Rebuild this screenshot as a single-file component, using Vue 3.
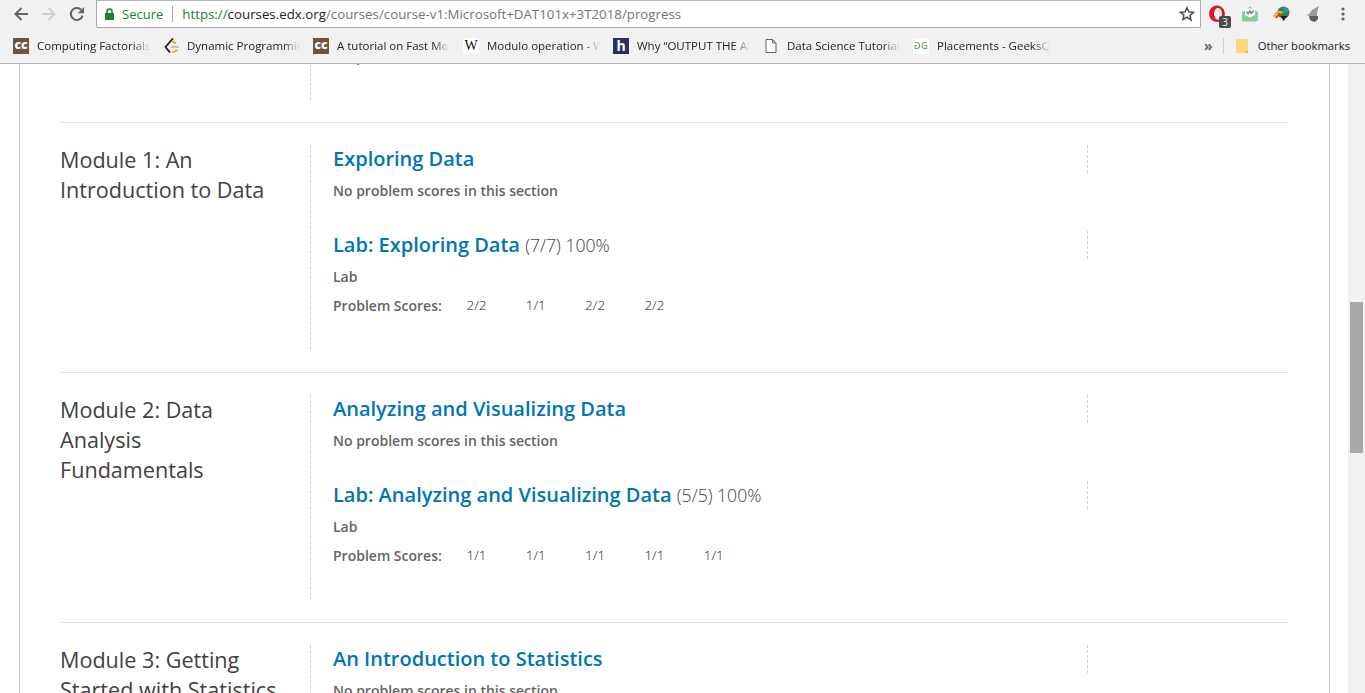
<script setup>
const bookmarks = [
  { label: 'Computing Factorials of Large', icon: 'cc' },
  { label: 'Dynamic Programming Tutorial', icon: 'lc' },
  { label: 'A tutorial on Fast Modulo Mult', icon: 'cc' },
  { label: 'Modulo operation - Wikipedia', icon: 'w' },
  { label: 'Why “OUTPUT THE ANSWER', icon: 'h' },
  { label: 'Data Science Tutorials for', icon: 'doc' },
  { label: 'Placements - GeeksQuiz', icon: 'gg' },
]
const modules = [
  {
    title: ['Module 1: An', 'Introduction to Data'],
    section: 'Exploring Data',
    lab: 'Lab: Exploring Data',
    count: '(7/7)',
    scores: ['2/2', '1/1', '2/2', '2/2'],
  },
  {
    title: ['Module 2: Data', 'Analysis', 'Fundamentals'],
    section: 'Analyzing and Visualizing Data',
    lab: 'Lab: Analyzing and Visualizing Data',
    count: '(5/5)',
    scores: ['1/1', '1/1', '1/1', '1/1', '1/1'],
  },
]
</script>

<template>
  <div class="window">
    <header class="chrome">
      <div class="toolbar">
        <div class="nav">
          <svg width="16" height="16" viewBox="0 0 16 16"><path d="M15 8H2.5M8.5 2 2.5 8l6 6" fill="none" stroke="#5f6368" stroke-width="2"/></svg>
          <svg width="16" height="16" viewBox="0 0 16 16"><path d="M1 8h12.5M7.5 2l6 6-6 6" fill="none" stroke="#cfd0d1" stroke-width="2"/></svg>
          <svg width="16" height="16" viewBox="0 0 16 16"><path d="M13.6 9.6A6 6 0 1 1 12.2 3.8" fill="none" stroke="#5f6368" stroke-width="2"/><path d="M15 1v6.2H8.8z" fill="#5f6368"/></svg>
        </div>
        <div class="omnibox">
          <svg class="lock" width="10" height="12" viewBox="0 0 10 12"><path d="M0 5h9v7H0z" fill="#188038"/><path d="M2 5V3.4a2.5 2.5 0 0 1 5 0V5" fill="none" stroke="#188038" stroke-width="1.5"/></svg>
          <span class="secure">Secure</span>
          <span class="divider"></span>
          <span class="url"><span class="scheme">https://</span><span class="host">courses.edx.org</span>/courses/course-v1:Microsoft+DAT101x+3T2018/progress</span>
          <svg class="star" width="16" height="16" viewBox="0 0 16 16"><path d="M8 1.700l1.900 4.200 4.600.5-3.400 3.100.9 4.500L8 11.200l-4 2.300.9-4.500L1.500 6.400l4.600-.5z" fill="none" stroke="#4a4a4a" stroke-width="1.500"/></svg>
        </div>
        <div class="extensions">
          <span class="ext opera">
            <svg width="18" height="20" viewBox="0 0 18 20"><path fill-rule="evenodd" d="M8 1.500c4.400 0 7.800 3.600 7.800 8.300S12.400 18 8 18 .2 14.500.2 9.800 3.600 1.500 8 1.500zm1 2.400c-2.300 0-4 2.500-4 5.900s1.700 5.900 4 5.900 4-2.500 4-5.900-1.700-5.900-4-5.900z" fill="#e0141e"/></svg>
            <span class="badge">3</span>
          </span>
          <svg width="18" height="18" viewBox="0 0 18 18"><path d="M1 7l3-1.500L9 1.500l5 4L17 7v7.500a2 2 0 0 1-2 2H3a2 2 0 0 1-2-2z" fill="#8ccb94"/><path d="M4 3.500h10v6.500l-5 2.500-5-2.500z" fill="#fff"/><path d="M5.500 6.500 7 9l1.800-3 1.500 2.500L13 5.500" fill="none" stroke="#6a6ad0" stroke-width="1.200"/></svg>
          <svg width="18" height="18" viewBox="0 0 18 18"><circle cx="10.500" cy="7.500" r="6" fill="#2a8a3c"/><path d="M9 2.500a5 5 0 0 1 6.500 4L11 8z" fill="#3f7fd8"/><path d="M1 12c1.500-5 5-6.500 8.500-4" fill="none" stroke="#d9b21e" stroke-width="2.200"/><path d="M3 13c1.500-3 4-3.500 6-2.500" fill="none" stroke="#d8382c" stroke-width="2"/><path d="M7.500 11h7l-4 5z" fill="#16241a"/></svg>
          <svg width="18" height="20" viewBox="0 0 18 20"><path d="M14 2 7 6 4 10l-3 1 4 1v4l4 2 3-3V9z" fill="#9a9a9a"/><path d="M4 12h9v3l-3 3-5-2z" fill="#5d5d5d"/></svg>
          <svg class="menu" width="4" height="14" viewBox="0 0 4 14"><circle cx="2" cy="2" r="1.600" fill="#5f6368"/><circle cx="2" cy="7" r="1.600" fill="#5f6368"/><circle cx="2" cy="12" r="1.600" fill="#5f6368"/></svg>
        </div>
      </div>
      <nav class="bookmarks">
        <a v-for="b in bookmarks" :key="b.label + b.icon" class="bookmark">
          <span v-if="b.icon === 'cc'" class="fav fav-cc">cc</span>
          <svg v-else-if="b.icon === 'lc'" class="fav" width="16" height="16" viewBox="0 0 16 16"><path d="M10 .5 2.500 9 7 14.500" fill="none" stroke="#1f1f1f" stroke-width="1.800"/><path d="M9 3l4 2.500M9.500 14.500 14.500 12" fill="none" stroke="#f0a020" stroke-width="1.800"/><path d="M8 9h8" stroke="#b8b8b8" stroke-width="1.600"/></svg>
          <span v-else-if="b.icon === 'w'" class="fav fav-w">W</span>
          <span v-else-if="b.icon === 'h'" class="fav fav-h">h</span>
          <svg v-else-if="b.icon === 'doc'" class="fav" width="16" height="16" viewBox="0 0 16 16"><path d="M3 1.500h6.500L13 5v9.500H3zM9.500 1.500V5H13" fill="#fff" stroke="#5f6368"/></svg>
          <span v-else class="fav fav-g"><span class="g-flip">G</span><span>G</span></span>
          <span class="bm-label">{{ b.label }}</span>
        </a>
        <span class="spacer"></span>
        <span class="more">»</span>
        <span class="sep"></span>
        <svg width="12" height="14" viewBox="0 0 12 14"><path d="M0 0h12v14H0z" fill="#fbd97a"/><path d="M10 12h2v2h-2z" fill="#e8b93f"/></svg>
        <span class="other">Other bookmarks</span>
      </nav>
    </header>

    <div class="viewport">
      <main class="page">
        <div class="frame">
          <section class="module module-clipped">
            <div class="col-title"></div>
            <div class="col-body clipped-body">
              <p class="clipped-line">No problem scores in this section</p>
            </div>
          </section>

          <section v-for="m in modules" :key="m.section" class="module">
            <h2 class="col-title"><span v-for="line in m.title" :key="line" class="title-line">{{ line }}</span></h2>
            <div class="col-body">
              <div class="block">
                <h3 class="heading"><a class="link">{{ m.section }}</a></h3>
                <p class="note">No problem scores in this section</p>
              </div>
              <div class="block lab">
                <h3 class="heading"><a class="link">{{ m.lab }}</a> <span class="count">{{ m.count }} 100%</span></h3>
                <p class="note lab-note">Lab</p>
                <div class="scores">
                  <span class="scores-label">Problem Scores:</span>
                  <span v-for="(s, i) in m.scores" :key="i" class="score">{{ s }}</span>
                </div>
              </div>
            </div>
          </section>

          <section class="module">
            <h2 class="col-title"><span class="title-line">Module 3: Getting</span><span class="title-line">Started with Statistics</span></h2>
            <div class="col-body">
              <div class="block">
                <h3 class="heading"><a class="link">An Introduction to Statistics</a></h3>
                <p class="note">No problem scores in this section</p>
              </div>
            </div>
          </section>
        </div>
      </main>
      <div class="scrollbar"><div class="thumb"></div></div>
    </div>
  </div>
</template>

<style>
html, body { margin: 0; height: 100%; overflow: hidden; background: #fff; }
</style>

<style scoped>
.window {
  width: 1365px;
  height: 693px;
  display: flex;
  flex-direction: column;
  overflow: hidden;
  font-family: "Open Sans", "Noto Sans", sans-serif;
}
.chrome {
  height: 64px;
  box-sizing: border-box;
  flex: none;
  background: #f1f1f1;
  border-bottom: 1px solid #b4b4b4;
}
.toolbar {
  height: 28px;
  display: flex;
  align-items: flex-start;
}
.nav {
  width: 96px;
  height: 28px;
  box-sizing: border-box;
  padding: 0 11px 0 13px;
  display: flex;
  align-items: center;
  justify-content: space-between;
}
.omnibox {
  width: 1105px;
  height: 28px;
  box-sizing: border-box;
  border: 1px solid #a9a9a9;
  border-top-color: #b8b8b8;
  border-radius: 0 0 2px 2px;
  background: #fff;
  display: flex;
  align-items: center;
  padding-left: 8px;
  font-size: 13.3px;
  color: #757575;
}
.lock { flex: none; }
.secure { margin-left: 7px; color: #188038; font-size: 13px; }
.divider { width: 1px; height: 16px; background: #a8a8a8; margin: 0 9px; }
.url { white-space: nowrap; }
.scheme { color: #188038; }
.host { color: #222; }
.star { margin-left: auto; margin-right: 5px; }
.extensions {
  flex: 1;
  height: 28px;
  display: flex;
  align-items: center;
  gap: 14px;
  padding-left: 8px;
}
.ext { position: relative; display: block; width: 18px; height: 20px; }
.badge {
  position: absolute;
  right: -4px;
  bottom: -4px;
  width: 12px;
  height: 12px;
  background: #4a4a4a;
  border-radius: 2px;
  color: #fff;
  font-size: 10px;
  line-height: 12px;
  text-align: center;
}
.menu { margin-left: 4px; }
.bookmarks {
  height: 35px;
  display: flex;
  align-items: center;
  padding-left: 13px;
  padding-right: 15px;
  font-size: 11.5px;
  color: #222;
}
.bookmark {
  width: 150px;
  flex: none;
  display: flex;
  align-items: center;
  white-space: nowrap;
}
.fav {
  width: 16px;
  height: 16px;
  flex: none;
  margin-right: 8px;
  display: block;
  text-align: center;
  line-height: 16px;
}
.fav-cc { background: #6f5440; color: #fff; font-weight: 800; font-size: 12px; line-height: 14px; }
.fav-w { background: #fff; color: #111; font-family: "Liberation Serif", serif; font-size: 14px; border-radius: 2px; }
.fav-h { background: #2a3158; color: #fff; font-weight: 700; font-size: 14px; line-height: 15px; }
.fav-g {
  background: #fff;
  color: #2f8d46;
  font-size: 9px;
  font-weight: 400;
  display: flex;
  justify-content: center;
}
.g-flip { display: block; transform: scaleX(-1); }
.bm-label {
  width: 113px;
  overflow: hidden;
  -webkit-mask-image: linear-gradient(to right, #000 85%, transparent 100%);
  mask-image: linear-gradient(to right, #000 85%, transparent 100%);
}
.spacer { flex: 1; }
.more { color: #666; font-size: 14px; font-weight: 700; margin-right: 10px; line-height: 14px; }
.sep { width: 1px; height: 16px; background: #cfcfcf; margin-right: 12px; }
.other { margin-left: 10px; font-size: 11.25px; }

.viewport {
  flex: 1;
  min-height: 0;
  display: flex;
  overflow: hidden;
}
.page {
  flex: 1;
  min-width: 0;
  padding: 0 18px 0 19px;
}
.frame {
  height: 100%;
  box-sizing: border-box;
  border-left: 1px solid #c8c8c8;
  border-right: 1px solid #c8c8c8;
  padding: 0 40px;
  overflow: hidden;
}
.scrollbar {
  width: 17px;
  flex: none;
  background: #f1f1f1;
  position: relative;
}
.thumb {
  position: absolute;
  left: 2px;
  top: 238px;
  width: 13px;
  height: 151px;
  background: #a8a8a8;
}
.module {
  display: grid;
  grid-template-columns: 250px 1fr;
  padding: 22px 0;
  border-top: 1px solid #e3e3e3;
  height: 250px;
  box-sizing: border-box;
}
.module-clipped {
  height: 58px;
  padding: 0 0 22px;
  border-top: 0;
}
.col-title {
  margin: 0;
  font-size: 21.6px;
  font-weight: 400;
  line-height: 30px;
  color: #414141;
}
.title-line { display: block; }
.col-body {
  border-left: 1px dashed #d4d4d4;
  padding-left: 22px;
  min-width: 0;
}
.clipped-body { overflow: hidden; }
.clipped-line {
  margin: -17px 0 0;
  font-size: 14px;
  line-height: 20px;
  font-weight: 600;
  color: #646464;
}
.block {
  width: 755px;
}
.lab { margin-top: 30px; }
.heading {
  margin: 0;
  height: 28px;
  box-sizing: border-box;
  border-right: 1px dashed #d4d4d4;
  font-size: 20px;
  line-height: 28px;
  font-weight: 600;
  white-space: nowrap;
}
.link { color: #0075b4; }
.count {
  font-size: 17.6px;
  font-weight: 300;
  color: #414141;
}
.note {
  margin: 8px 0 0;
  font-size: 14px;
  line-height: 20px;
  font-weight: 600;
  color: #646464;
}
.lab-note { margin-top: 8px; }
.scores {
  display: flex;
  align-items: center;
  margin-top: 8px;
  height: 20px;
  font-size: 14px;
  color: #646464;
}
.scores-label { font-weight: 600; width: 133.5px; flex: none; }
.score { width: 59.3px; flex: none; color: #222; font-size: 13.5px; font-weight: 300; }
</style>
